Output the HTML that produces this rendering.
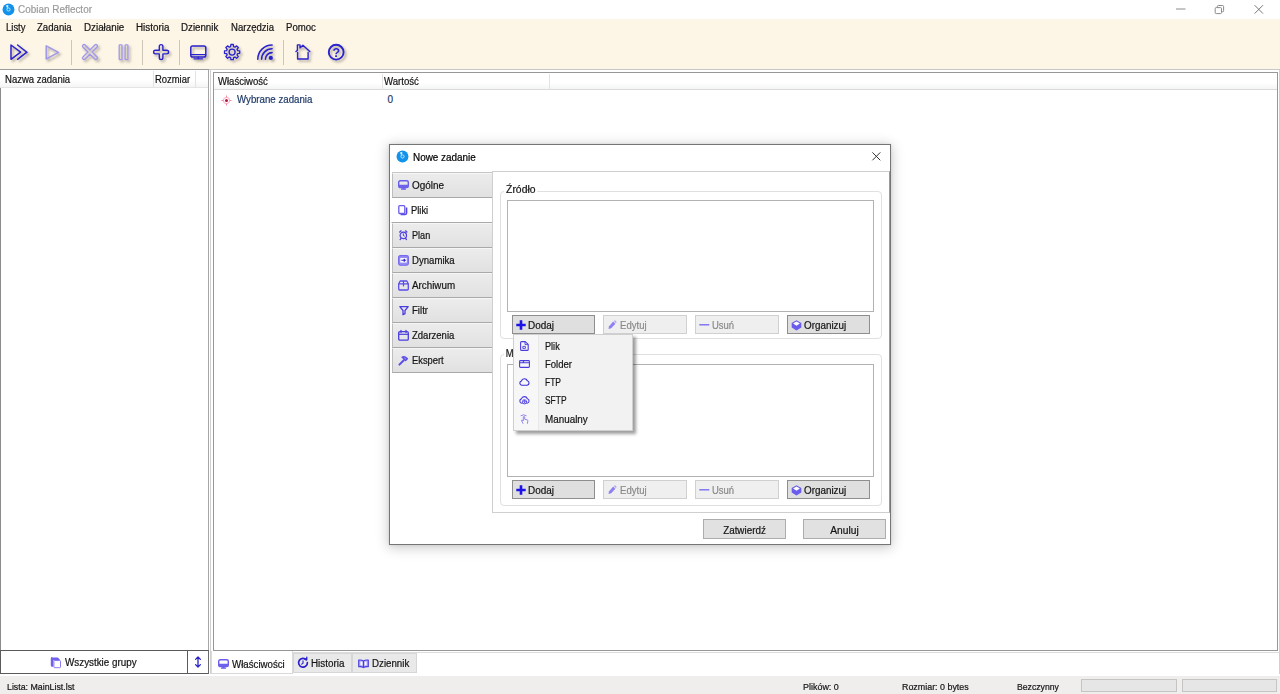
<!DOCTYPE html>
<html lang="pl">
<head>
<meta charset="utf-8">
<title>Cobian Reflector</title>
<style>
*{box-sizing:border-box;margin:0;padding:0}
html,body{width:1280px;height:694px;overflow:hidden;background:#fff}
body{position:relative;font-family:"Liberation Sans",sans-serif;font-size:10px;letter-spacing:0;color:#141414;-webkit-font-smoothing:antialiased}
.abs{position:absolute}
.t{position:absolute;white-space:nowrap;line-height:12px;-webkit-text-stroke:.2px}
svg{position:absolute;overflow:visible}
/* title bar */
#titlebar{left:0;top:0;width:1280px;height:19px;background:#fff}
#cream{left:0;top:19px;width:1280px;height:50px;background:#fdf5e6}
#topline{left:0;top:69px;width:1280px;height:1px;background:linear-gradient(90deg,#9c9c9c 209px,#c8c8c8 209px)}
/* left panel */
#left{left:0;top:70px;width:209px;height:580px;background:#fff;border-right:1px solid #a6a6a6;border-left:1px solid #8c8c8c}
#lefthdr{left:0;top:70px;width:208px;height:18px;background:linear-gradient(#fff,#fff 60%,#f4f5f6);border-bottom:1px solid #e5e5e5}
.colsep{position:absolute;width:1px;background:#e3e3e3}
#grpbtn{left:0;top:650px;width:188px;height:24px;background:#fff;border:1px solid #5a5a5a}
#arrbtn{left:188px;top:650px;width:21px;height:24px;background:#fff;border-top:1px solid #5a5a5a;border-bottom:1px solid #5a5a5a;border-right:1px solid #6a6a6a}
/* right */
#rightwrap{left:210px;top:70px;width:1070px;height:604px;background:#fff;border-left:1px solid #d0d0d0;border-right:1px solid #d0d0d0}
#rlist{left:213px;top:72px;width:1065px;height:579px;background:#fff;border:1px solid #979797}
#rhdr{left:214px;top:73px;width:1063px;height:17px;background:linear-gradient(#fff,#fff 60%,#f4f5f6);border-bottom:1px solid #dadada}
.btab{position:absolute;top:653px;height:20px;background:#e9e9e9;border:1px solid #d6d6d6}
#btab1{left:211px;top:651px;width:82px;height:23px;background:#fff;border:1px solid #d9d9d9;border-top:none}
#status{left:0;top:676px;width:1280px;height:18px;background:#f0eded}
.prog{position:absolute;top:679px;height:13px;background:#e6e6e6;border:1px solid #c4c4c4}
/* dialog */
#dlg{left:389px;top:144px;width:502px;height:401px;background:#fff;border:1px solid #757575;box-shadow:0 2px 12px 1px rgba(0,0,0,.2),0 0 3px rgba(0,0,0,.1)}
.dtab{position:absolute;left:392px;width:101px;height:25px;background:linear-gradient(#ececec,#e1e1e1);border-bottom:1px solid #a9a9a9;border-top:1px solid #f6f6f6;border-left:1px solid #bdbdbd}
.dtab.sel{background:#fff;border-color:#fff;border-bottom:1px solid #a9a9a9;left:391px;width:102px}
#page{left:492px;top:171px;width:398px;height:342px;background:#fff;border:1px solid #cfcfcf;border-right:1px solid #9a9a9a}
.grp{position:absolute;left:500px;width:382px;height:148px;border:1px solid #e0e0e0;border-radius:4px}
.lbox{position:absolute;left:507px;width:367px;height:112px;background:#fff;border:1px solid #b2b2b2}
.btn{position:absolute;height:19px;width:83px;background:#e1e1e1;border:1px solid #adadad}
.btn.dk{border-color:#8e8e8e;background:#dfdfdf}
.btn.dis{background:#efefef;border-color:#d0d0d0;width:84px}
.btn.dis .t{color:#8a8a8a}
#pop{left:513px;top:334px;width:120px;height:97px;background:#f2f2f2;border:1px solid #cfcfcf;box-shadow:3px 3px 3px rgba(0,0,0,.38)}
#popg{left:514px;top:335px;width:25px;height:95px;background:#f7f7f7;border-right:1px solid #e8e8e8}
</style>
</head>
<body>
<div id="titlebar" class="abs"></div>
<div id="cream" class="abs"></div>
<div id="topline" class="abs"></div>

<!-- title -->
<svg style="left:1.55px;top:3px" width="13" height="13" viewBox="0 0 13 13"><circle cx="6.5" cy="6.45" r="5.95" fill="#1292ea"/><circle cx="5.3" cy="3.1" r="1.15" fill="#d8f4ff"/><path d="M5.3 4v1.600" stroke="#bfe6fb" stroke-width="0.9" fill="none"/><circle cx="6.5" cy="6.500" r="1.600" fill="none" stroke="#c9ebfc" stroke-width="0.9"/></svg>
<div class="t" style="left:18px;top:4px;color:#9a9a9a;transform:scaleX(0.993);transform-origin:left">Cobian Reflector</div>


<!-- window controls -->
<svg style="left:1170px;top:0" width="110" height="19" viewBox="1170 0 110 19" fill="none" stroke="#8c8c8c" stroke-width="1">
<path d="M1176 9h9.5"/>
<rect x="1215.2" y="7.6" width="6.3" height="6" rx="1"/><path d="M1217.3 7.4v-0.9q0-1 1-1h4.300q1 0 1 1v4.300q0 1-1 1h-0.900"/>
<path d="M1254.600 5.200l8.400 8.400M1263 5.200l-8.400 8.400" stroke="#777"/>
</svg>

<!-- menu -->
<div class="t" style="left:6px;top:21.5px;transform:scaleX(0.948);transform-origin:left">Listy</div>
<div class="t" style="left:37px;top:21.5px;transform:scaleX(0.960);transform-origin:left">Zadania</div>
<div class="t" style="left:84px;top:21.5px;transform:scaleX(0.980);transform-origin:left">Działanie</div>
<div class="t" style="left:136px;top:21.5px;transform:scaleX(0.985);transform-origin:left">Historia</div>
<div class="t" style="left:181px;top:21.5px;transform:scaleX(0.972);transform-origin:left">Dziennik</div>
<div class="t" style="left:231px;top:21.5px;transform:scaleX(0.955);transform-origin:left">Narzędzia</div>
<div class="t" style="left:286px;top:21.5px;transform:scaleX(0.961);transform-origin:left">Pomoc</div>


<!-- toolbar -->
<svg width="0" height="0" style="left:0;top:0"><defs>
<filter id="sh" x="-30%" y="-30%" width="170%" height="170%"><feDropShadow dx="1.8" dy="2" stdDeviation="1.2" flood-color="#5f5a48" flood-opacity=".5"/></filter>
</defs></svg>
<svg id="tb" style="left:0;top:38px" width="360" height="31" viewBox="0 38 360 31" fill="none" stroke="#2a21cc" stroke-width="1.5" stroke-linejoin="round" stroke-linecap="round">
<g filter="url(#sh)">
<!-- run all -->
<path d="M11 45v14.3l9.6-7.15z"/><path d="M17.6 45l9.2 7.15-9.2 7.15" stroke-linejoin="miter"/>
<!-- help -->
<circle cx="336.2" cy="52.2" r="7.4" stroke-width="1.9"/><text x="336.2" y="56.6" text-anchor="middle" font-family="Liberation Sans, sans-serif" font-weight="bold" font-size="12.5" letter-spacing="0" fill="#2a21cc" stroke="none">?</text>
<!-- add -->
<path transform="translate(161.1 52.1)" d="M-1.8 -1.8L-1.8 -5.7A1.8 1.8 0 0 1 1.8 -5.7L1.8 -1.8L5.7 -1.8A1.8 1.8 0 0 1 5.7 1.8L1.8 1.8L1.8 5.7A1.8 1.8 0 0 1 -1.8 5.7L-1.8 1.8L-5.7 1.8A1.8 1.8 0 0 1 -5.7 -1.8Z" stroke-width="1.4"/>
<!-- monitor -->
<rect x="190.8" y="46" width="15" height="11" rx="1.8"/><path d="M191 54.6h14.6M194 58.8h8.6M198.3 57v1.8" stroke-width="1.2"/>
<!-- gear -->
<circle cx="232.1" cy="52.1" r="3" stroke-width="1.4"/>
<path stroke-width="1.3" d="M230.64 46.59L230.90 44.49L233.30 44.49L233.56 46.59L234.96 47.17L236.63 45.87L238.33 47.57L237.03 49.24L237.61 50.64L239.71 50.90L239.71 53.30L237.61 53.56L237.03 54.96L238.33 56.63L236.63 58.33L234.96 57.03L233.56 57.61L233.30 59.71L230.90 59.71L230.64 57.61L229.24 57.03L227.57 58.33L225.87 56.63L227.17 54.96L226.59 53.56L224.49 53.30L224.49 50.90L226.59 50.64L227.17 49.24L225.87 47.57L227.57 45.87L229.24 47.17Z"/>
<!-- wifi -->
<path d="M257.8 59.3a14.3 14.3 0 0 1 14.3-14.3M261.6 59.3a10.5 10.5 0 0 1 10.5-10.5M265.4 59.3a6.7 6.7 0 0 1 6.7-6.7" stroke-width="1.6"/><circle cx="270.8" cy="57.9" r="2.1" fill="#2a21cc" stroke="none"/>
<!-- house -->
<path d="M296 51.6l1.4-1.3v-5.4h2.6v3l2.9-2.7 6.9 6.4M297.6 52.4v6.6h10.5v-6.6" stroke-width="1.4"/>
</g>
<g filter="url(#sh)" stroke="#a298e6">
<path d="M46.2 45.8v13.2l12.2-6.6z" stroke-width="1.5"/>
<path transform="translate(90 52.1) rotate(45)" d="M-1.5 -1.5L-1.5 -8.4A1.5 1.5 0 0 1 1.5 -8.4L1.5 -1.5L8.4 -1.5A1.5 1.5 0 0 1 8.4 1.5L1.5 1.5L1.5 8.4A1.5 1.5 0 0 1 -1.5 8.4L-1.5 1.5L-8.4 1.5A1.5 1.5 0 0 1 -8.4 -1.5Z" stroke-width="1.4"/>
<rect x="119.200" y="44.8" width="2.800" height="14.8" rx="0.6" stroke-width="1.3"/><rect x="125.100" y="44.8" width="2.800" height="14.8" rx="0.6" stroke-width="1.3"/>
</g>
</svg>
<div class="abs" style="left:71px;top:40px;width:1px;height:25px;background:#cdc5b6"></div>
<div class="abs" style="left:142px;top:40px;width:1px;height:25px;background:#cdc5b6"></div>
<div class="abs" style="left:179px;top:40px;width:1px;height:25px;background:#cdc5b6"></div>
<div class="abs" style="left:283px;top:40px;width:1px;height:25px;background:#cdc5b6"></div>

<!-- left panel -->
<div id="left" class="abs"></div>
<div id="lefthdr" class="abs"></div>
<div class="colsep" style="left:153px;top:71px;height:17px"></div>
<div class="colsep" style="left:195px;top:71px;height:17px"></div>
<div class="t" style="left:5px;top:74px;transform:scaleX(0.952);transform-origin:left">Nazwa zadania</div>
<div class="t" style="left:155px;top:74px;transform:scaleX(0.943);transform-origin:left">Rozmiar</div>
<div id="grpbtn" class="abs"></div>
<div id="arrbtn" class="abs"></div>
<div class="t" style="left:65px;top:656.5px;transform:scaleX(0.984);transform-origin:left">Wszystkie grupy</div>

<!-- right -->
<div id="rightwrap" class="abs"></div>
<div id="rlist" class="abs"></div>
<div id="rhdr" class="abs"></div>
<div class="colsep" style="left:382px;top:74px;height:16px"></div>
<div class="colsep" style="left:549px;top:74px;height:16px"></div>
<div class="t" style="left:218px;top:75.5px;transform:scaleX(0.953);transform-origin:left">Właściwość</div>
<div class="t" style="left:384px;top:75.5px;transform:scaleX(0.961);transform-origin:left">Wartość</div>
<div class="t" style="left:237px;top:94px;color:#1f3a68;transform:scaleX(0.970);transform-origin:left">Wybrane zadania</div>
<div class="t" style="left:387.5px;top:94px;color:#1f3a68">0</div>

<!-- bottom tabs -->
<div class="abs" style="left:293px;top:652px;width:986px;height:1px;background:#dcdcdc"></div>
<div id="btab1" class="abs"></div>
<div class="btab" style="left:293px;width:59px"></div>
<div class="btab" style="left:352px;width:65px"></div>
<div class="t" style="left:232px;top:658.5px;transform:scaleX(0.969);transform-origin:left">Właściwości</div>
<div class="t" style="left:311px;top:657.5px;transform:scaleX(0.985);transform-origin:left">Historia</div>
<div class="t" style="left:371.500px;top:657.5px;transform:scaleX(0.972);transform-origin:left">Dziennik</div>


<!-- misc icons -->
<svg style="left:221px;top:95px" width="11" height="11" viewBox="-5.500 -5.500 11 11"><circle r="3.100" fill="none" stroke="#f5a9bd" stroke-width="1"/><path d="M0-5v2M0 5v-2M-5 0h2M5 0h-2" stroke="#f08aa6" stroke-width="1"/><circle r="1.500" fill="#b3123f"/></svg>
<!-- all groups -->
<svg style="left:50px;top:656.500px" width="12" height="12" viewBox="0 0 12 12"><path d="M2.200 0.600h5.600l2 2v0.600h-6.400v6.600h-1.200q-1.400 0-1.400-1.400v-7q0-1.400 1.400-1.400z" fill="#6f60ee"/><rect x="3.900" y="3.500" width="6.600" height="7.200" rx="0.800" fill="#fff" stroke="#8a7df2" stroke-width="1"/></svg>
<!-- updown -->
<svg style="left:193px;top:656px" width="10" height="12" viewBox="0 0 10 12" fill="none" stroke="#2a21cc" stroke-width="1.300" stroke-linecap="round" stroke-linejoin="round"><path d="M5 1.200v9.600M2.600 3.400l2.400-2.400 2.400 2.400M2.600 8.600l2.400 2.400 2.400-2.400"/></svg>
<!-- bottom tab icons -->
<svg style="left:218px;top:659px" width="11" height="10" viewBox="0 0 11 10" fill="none" stroke="#6a5cec" stroke-width="1.100"><rect x="0.700" y="0.700" width="9.600" height="6.900" rx="1.500" stroke-width="1.400"/><path d="M0.700 4.700h9.600v1.500q0 1.400-1.400 1.400h-6.800q-1.400 0-1.400-1.400z" fill="#6f62ea" stroke="none"/><path d="M3 9.100h5" stroke-width="1.300"/><path d="M5.500 7.800v1.300" stroke-width="2"/></svg>
<svg style="left:297px;top:657.200px" width="12" height="12" viewBox="0 0 12 12" fill="none" stroke="#2a21cc" stroke-width="1.700" stroke-linecap="round"><path d="M9.400 2.900a4.400 4.400 0 1 0 1 2.600"/><path d="M7.600 2.200h2.200v-2" stroke-width="1.300" stroke-linejoin="round"/><path d="M6 3.900v2.300l-1.300 0.900" stroke-width="1.100"/></svg>
<svg style="left:358px;top:658.500px" width="11" height="10" viewBox="0 0 11 10" fill="#b3aaf6" stroke="#4a3de0" stroke-width="1.100" stroke-linejoin="round"><path d="M5.500 1.900q-2-1.300-4.800-0.800v6.700q2.800-0.500 4.800 0.800q2-1.300 4.800-0.800v-6.700q-2.800-0.500-4.800 0.800z"/><path d="M5.500 1.900v6.700" fill="none"/><path d="M2.500 2.500q1 0 1.800 0.500v3.400q-0.800-0.400-1.800-0.400zM8.500 2.500q-1 0-1.800 0.500v3.400q0.800-0.400 1.800-0.400z" fill="#fff" stroke="none"/></svg>

<!-- status -->
<div id="status" class="abs"></div>
<div class="t" style="left:7px;top:680.5px;transform:scaleX(0.926);transform-origin:left;font-size:9.5px">Lista: MainList.lst</div>
<div class="t" style="left:803px;top:680.5px;transform:scaleX(0.942);transform-origin:left;font-size:9.5px">Plików: 0</div>
<div class="t" style="left:902px;top:680.5px;transform:scaleX(0.936);transform-origin:left;font-size:9.5px">Rozmiar: 0 bytes</div>
<div class="t" style="left:1017px;top:680.5px;transform:scaleX(0.912);transform-origin:left;font-size:9.5px">Bezczynny</div>
<div class="prog" style="left:1081px;width:96px"></div>
<div class="prog" style="left:1182px;width:95px"></div>

<!-- dialog -->
<div id="dlg" class="abs"></div>
<svg style="left:396px;top:150px" width="13" height="13" viewBox="0 0 13 13"><circle cx="6.5" cy="6.45" r="5.95" fill="#1292ea"/><circle cx="5.3" cy="3.1" r="1.15" fill="#d8f4ff"/><path d="M5.3 4v1.600" stroke="#bfe6fb" stroke-width="0.9" fill="none"/><circle cx="6.5" cy="6.500" r="1.600" fill="none" stroke="#c9ebfc" stroke-width="0.9"/></svg>
<div class="t" style="left:413px;top:151.500px;color:#000;transform:scaleX(0.991);transform-origin:left">Nowe zadanie</div>
<svg style="left:871.500px;top:152.200px" width="9" height="9" viewBox="0 0 9 9"><path d="M0.400 0.400l7.900 7.900M8.300 0.400l-7.900 7.900" stroke="#333" stroke-width="1" fill="none"/></svg>

<div class="abs" style="left:392px;top:172px;width:100px;height:1px;background:#c6c6c6"></div>
<div class="dtab" style="top:173px"></div>
<div class="dtab sel" style="top:198px"></div>
<div class="dtab" style="top:223px"></div>
<div class="dtab" style="top:248px"></div>
<div class="dtab" style="top:273px"></div>
<div class="dtab" style="top:298px"></div>
<div class="dtab" style="top:323px"></div>
<div class="dtab" style="top:348px"></div>
<div class="t" style="left:412px;top:180px;transform:scaleX(0.995);transform-origin:left">Ogólne</div>
<div class="t" style="left:410.500px;top:205px;transform:scaleX(0.938);transform-origin:left">Pliki</div>
<div class="t" style="left:412px;top:230px;transform:scaleX(0.909);transform-origin:left">Plan</div>
<div class="t" style="left:412px;top:255px;transform:scaleX(0.960);transform-origin:left">Dynamika</div>
<div class="t" style="left:412px;top:280px;transform:scaleX(0.982);transform-origin:left">Archiwum</div>
<div class="t" style="left:412px;top:305px;transform:scaleX(0.960);transform-origin:left">Filtr</div>
<div class="t" style="left:412px;top:330px;transform:scaleX(0.951);transform-origin:left">Zdarzenia</div>
<div class="t" style="left:412px;top:355px;transform:scaleX(0.935);transform-origin:left">Ekspert</div>


<!-- dialog tab icons -->
<svg style="left:398px;top:180px" width="11" height="10" viewBox="0 0 11 10" fill="none" stroke="#6a5cec" stroke-width="1.300"><rect x="0.700" y="0.700" width="9.600" height="6.900" rx="1.500" stroke-width="1.400"/><path d="M0.700 4.700h9.600v1.500q0 1.400-1.400 1.400h-6.800q-1.400 0-1.400-1.400z" fill="#6f62ea" stroke="none"/><path d="M3 9.100h5" stroke-width="1.300"/><path d="M5.500 7.800v1.300" stroke-width="2"/></svg>
<svg style="left:398px;top:205px" width="10" height="11" viewBox="0 0 10 11" fill="none" stroke="#6a5cec" stroke-width="1.300" stroke-linejoin="round"><path d="M2.600 9.500h4.600q1.400 0 1.400-1.400v-5.600" stroke="#5346e4" stroke-width="1.500"/><rect x="0.800" y="0.700" width="6" height="7.800" rx="1.100" fill="#fff"/></svg>
<svg style="left:398px;top:230px" width="11" height="11" viewBox="0 0 11 11" fill="none" stroke="#4a3de0" stroke-width="1.200" stroke-linecap="round"><circle cx="5.300" cy="5.400" r="3.200"/><path d="M5.300 3.800v1.700l1.100 0.600" stroke-width="1"/><path d="M1.700 2l1.400-1.200M8.900 2l-1.400-1.200M3 8.300l-0.900 1.300M7.600 8.300l0.900 1.300"/></svg>
<svg style="left:398px;top:255px" width="11" height="11" viewBox="0 0 11 11"><rect x="0.600" y="0.600" width="9.800" height="9.600" rx="1.600" fill="#968bf3" stroke="#7568ec" stroke-width="1.100"/><rect x="2.300" y="3" width="6.400" height="4.600" fill="#fff"/><path d="M3.300 5.300h3.600M5.800 4l1.400 1.300-1.400 1.300" stroke="#2a21cc" stroke-width="1.100" fill="none"/></svg>
<svg style="left:398px;top:280px" width="11" height="11" viewBox="0 0 11 11" fill="none" stroke="#5a4ce8" stroke-width="1.300" stroke-linejoin="round"><path d="M0.700 3.800l1.500-2.800h6.600l1.500 2.800v5.200q0 1-1 1h-7.600q-1 0-1-1zM0.700 3.800h9.600"/><path d="M5.500 1v5.400" stroke-width="1.200"/></svg>
<svg style="left:398.500px;top:305.500px" width="10" height="10" viewBox="0 0 10 10" fill="none" stroke="#4a3de0" stroke-width="1.300" stroke-linejoin="round"><path d="M0.800 0.700h8.400l-3.200 3.800v3.200l-2 1v-4.200z"/></svg>
<svg style="left:398px;top:330px" width="11" height="11" viewBox="0 0 11 11" fill="none" stroke="#4a3de0" stroke-width="1.300"><rect x="0.700" y="1.700" width="9.600" height="8.400" rx="1.200"/><path d="M0.700 4.300h9.600" stroke-width="1.200"/><path d="M3 0.500v2M8 0.500v2" stroke-linecap="round"/></svg>
<svg style="left:398px;top:355px" width="11" height="11" viewBox="0 0 11 11" fill="none" stroke="#5a4ce8" stroke-linecap="round" stroke-linejoin="round"><path d="M1.400 9.600l4.400-4.400" stroke-width="2"/><path d="M4 2.200q2.400-1.600 5.400 1.600l-1.800 1.800-3.400-3.400z" stroke-width="1.300" fill="#8d82ef"/></svg>

<div id="page" class="abs"></div>
<div class="grp" style="top:191px"></div>
<div class="grp" style="top:354px;height:152px"></div>
<div class="t" style="left:504px;top:184px;background:#fff;padding:0 2px;transform:scaleX(1.037);transform-origin:left">Źródło</div>
<div class="t" style="left:504px;top:348px;background:#fff;padding:0 2px;transform:scaleX(0.937);transform-origin:left">Miejsce docelowe</div>
<div class="lbox" style="top:200px"></div>
<div class="lbox" style="top:364px;height:113px"></div>

<div class="btn dk" style="left:512px;top:315px"><div class="t" style="left:15px;top:3.5px;transform:scaleX(0.995);transform-origin:left">Dodaj</div></div>
<div class="btn dis" style="left:603px;top:315px"><div class="t" style="left:16px;top:3.5px;transform:scaleX(0.957);transform-origin:left">Edytuj</div></div>
<div class="btn dis" style="left:695px;top:315px"><div class="t" style="left:16px;top:3.5px;transform:scaleX(0.946);transform-origin:left">Usuń</div></div>
<div class="btn dk" style="left:787px;top:315px"><div class="t" style="left:16px;top:3.5px;transform:scaleX(0.986);transform-origin:left">Organizuj</div></div>

<div class="btn dk" style="left:512px;top:480px"><div class="t" style="left:15px;top:3.5px;transform:scaleX(0.995);transform-origin:left">Dodaj</div></div>
<div class="btn dis" style="left:603px;top:480px"><div class="t" style="left:16px;top:3.5px;transform:scaleX(0.957);transform-origin:left">Edytuj</div></div>
<div class="btn dis" style="left:695px;top:480px"><div class="t" style="left:16px;top:3.5px;transform:scaleX(0.946);transform-origin:left">Usuń</div></div>
<div class="btn dk" style="left:787px;top:480px"><div class="t" style="left:16px;top:3.5px;transform:scaleX(0.986);transform-origin:left">Organizuj</div></div>

<div class="btn" style="left:703px;top:519px;height:20px"><div class="t" style="left:0;width:81px;text-align:center;top:4.5px;transform:scaleX(0.985);transform-origin:center">Zatwierdź</div></div>
<div class="btn" style="left:803px;top:519px;height:20px"><div class="t" style="left:0;width:81px;text-align:center;top:4.5px;transform:scaleX(1.025);transform-origin:center">Anuluj</div></div>


<svg style="left:516px;top:320px" width="10" height="10" viewBox="0 0 10 10"><path d="M5 0.300v9.400M0.300 5h9.400" stroke="#1a12e6" stroke-width="2.600" fill="none"/></svg>
<svg style="left:608px;top:320px" width="9" height="10" viewBox="0 0 9 10"><path d="M5.200 1.600l2.200 2.200-4.200 4.400-2.700 0.900 0.600-2.900z" fill="#8d80f2"/><path d="M6 0.900l0.900-0.700 1.800 1.800-0.800 0.900z" fill="#a79cf5"/></svg>
<svg style="left:699px;top:320px" width="11" height="10" viewBox="0 0 11 10"><path d="M0.300 4.800h10" stroke="#7a6cf0" stroke-width="1.400" fill="none"/></svg>
<svg style="left:791px;top:320px" width="11" height="11" viewBox="0 0 11 11"><path d="M5.500 0.200l4.800 2.800v4.400l-4.800 3.200-4.800-3.200v-4.400z" fill="#6a5cec"/><path d="M5.500 1.600l3.400 2-3.400 2.200-3.400-2.200z" fill="#fff"/></svg>

<svg style="left:516px;top:485px" width="10" height="10" viewBox="0 0 10 10"><path d="M5 0.300v9.400M0.300 5h9.400" stroke="#1a12e6" stroke-width="2.600" fill="none"/></svg>
<svg style="left:608px;top:485px" width="9" height="10" viewBox="0 0 9 10"><path d="M5.200 1.600l2.200 2.200-4.200 4.400-2.700 0.900 0.600-2.900z" fill="#8d80f2"/><path d="M6 0.900l0.900-0.700 1.800 1.800-0.800 0.900z" fill="#a79cf5"/></svg>
<svg style="left:699px;top:485px" width="11" height="10" viewBox="0 0 11 10"><path d="M0.300 4.800h10" stroke="#7a6cf0" stroke-width="1.400" fill="none"/></svg>
<svg style="left:791px;top:485px" width="11" height="11" viewBox="0 0 11 11"><path d="M5.500 0.200l4.800 2.800v4.400l-4.800 3.200-4.800-3.200v-4.400z" fill="#6a5cec"/><path d="M5.500 1.600l3.400 2-3.400 2.200-3.400-2.200z" fill="#fff"/></svg>

<!-- popup -->
<div id="pop" class="abs"></div>
<div id="popg" class="abs"></div>
<div class="t" style="left:545px;top:340.5px;transform:scaleX(0.912);transform-origin:left">Plik</div>
<div class="t" style="left:545px;top:358.5px;transform:scaleX(0.952);transform-origin:left">Folder</div>
<div class="t" style="left:545px;top:376.5px;transform:scaleX(0.847);transform-origin:left">FTP</div>
<div class="t" style="left:545px;top:394.5px;transform:scaleX(0.841);transform-origin:left">SFTP</div>
<div class="t" style="left:545px;top:413.5px;transform:scaleX(0.987);transform-origin:left">Manualny</div>

<!-- popup icons -->
<svg style="left:520px;top:341px" width="9" height="10" viewBox="0 0 9 10" fill="none" stroke="#4a3de0" stroke-width="1.100" stroke-linejoin="round"><path d="M1.600 0.600h3.600l3 2.800v5q0 1-1 1h-5.600q-1 0-1-1v-6.800q0-1 1-1z"/><path d="M5 0.800v2.800h3" stroke-width="0.900"/><path d="M2.800 5.400h2.600v2h-2.600z" stroke-width="0.900"/></svg>
<svg style="left:519px;top:360px" width="11" height="8" viewBox="0 0 11 8" fill="none" stroke="#4a3de0" stroke-width="1.100" stroke-linejoin="round"><rect x="0.600" y="0.600" width="9.800" height="6.800" rx="0.800"/><path d="M0.600 2.800h9.800M0.600 2.800h3.400l0.800-2.200"/></svg>
<svg style="left:519px;top:378px" width="11" height="8" viewBox="0 0 11 8" fill="none" stroke="#3a2dd8" stroke-width="1.100" stroke-linejoin="round"><path d="M2.800 7.300a2.200 2.200 0 0 1-0.400-4.300a3.100 3.100 0 0 1 5.900-0.200a2.300 2.300 0 0 1-0.200 4.500z"/></svg>
<svg style="left:519px;top:396px" width="11" height="9" viewBox="0 0 11 9" fill="none" stroke="#4a3de0" stroke-width="1.100" stroke-linejoin="round" stroke-linecap="round"><path d="M3.200 7.200h-0.400a2.200 2.200 0 0 1-0.400-4.300a3.100 3.100 0 0 1 5.900-0.200a2.300 2.300 0 0 1-0.200 4.500h-0.300"/><circle cx="5.500" cy="5.800" r="2.100" stroke-width="0.900"/><path d="M5.500 7v-2.400M4.600 5.400l0.900-0.900 0.900 0.900" stroke-width="0.800"/></svg>
<svg style="left:520px;top:414px" width="9" height="10" viewBox="0 0 9 10" fill="none" stroke="#9085f0" stroke-width="1" stroke-linecap="round" stroke-linejoin="round"><path d="M1 1.600q2.600-1.800 5.200 0M3 9.400l-1.600-3 0.700-0.600 1.200 1.200v-4.200q0.800-0.700 1.400 0v2.400l2.600 0.700q0.700 0.300 0.600 1.100l-0.500 2.400"/></svg>
</body>
</html>
